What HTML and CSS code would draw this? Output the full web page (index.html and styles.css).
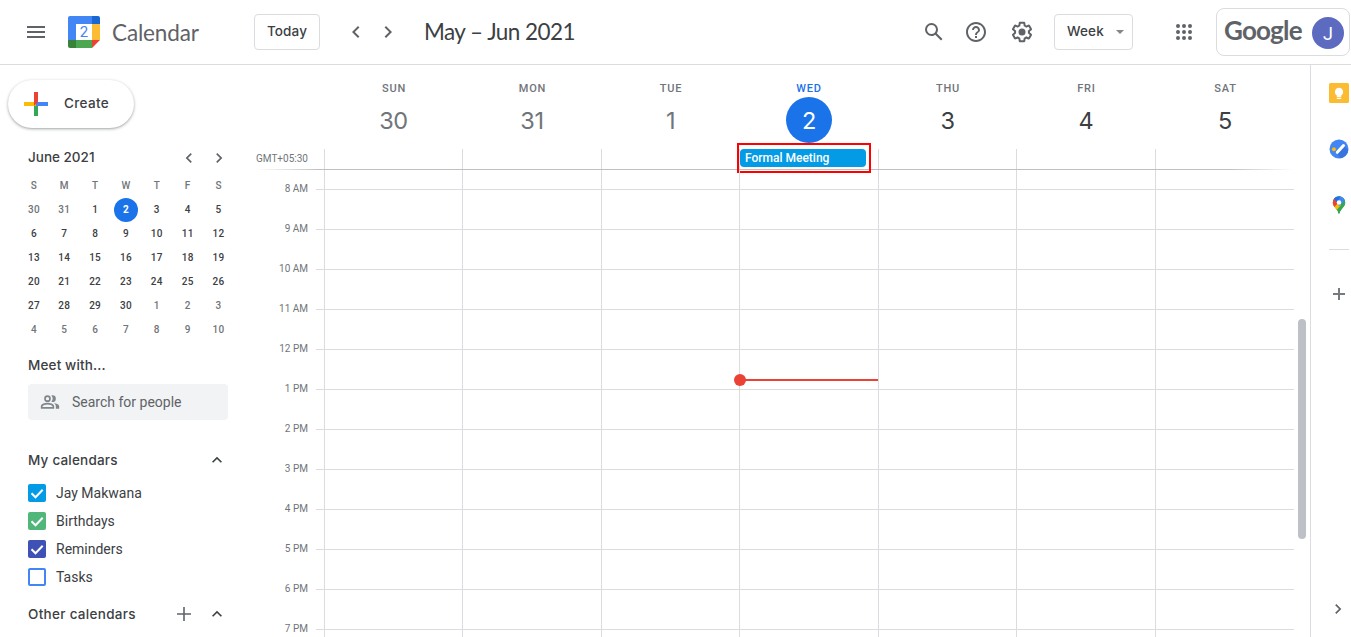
FILE: index.html
```html
<!DOCTYPE html>
<html lang="en">
<head>
<meta charset="utf-8">
<title>Calendar</title>
<link rel="stylesheet" href="styles.css">
</head>
<body>
<header class="topbar">
  <svg class="icon" viewBox="0 0 24 24"><path d="M3 18h18v-2H3v2zm0-5h18v-2H3v2zm0-7v2h18V6H3z"/></svg>
  <div class="logo">
    <svg width="32" height="32" viewBox="0 0 32 32">
      <path fill="#4285f4" d="M2 0h22v8H8v16H0V2a2 2 0 0 1 2-2z"/>
      <path fill="#1967d2" d="M24 0h6a2 2 0 0 1 2 2v6h-8z"/>
      <path fill="#fbbc34" d="M24 8h8v16h-8z"/>
      <path fill="#4ca750" d="M8 24h16v8H8z"/>
      <path fill="#388339" d="M0 24h8v8H2a2 2 0 0 1-2-2z"/>
      <path fill="#ea4335" d="M24 24h8l-8 8z"/>
      <text class="logo-day" x="16" y="21.3" text-anchor="middle">2</text>
    </svg>
    <span class="brand">Calendar</span>
  </div>
  <button class="btn today">Today</button>
  <nav class="pager">
    <svg class="icon" viewBox="0 0 24 24"><path d="M15.4 7.4 14 6l-6 6 6 6 1.4-1.4L10.8 12z"/></svg>
    <svg class="icon" viewBox="0 0 24 24"><path d="M10 6 8.6 7.4l4.6 4.6-4.6 4.6L10 18l6-6z"/></svg>
  </nav>
  <h1 class="range">May – Jun 2021</h1>
  <div class="tools">
    <svg class="icon" viewBox="0 0 24 24"><path d="M20.49 19l-5.73-5.73C15.53 12.2 16 10.91 16 9.5A6.5 6.5 0 1 0 9.5 16c1.41 0 2.7-.47 3.77-1.24L19 20.49 20.49 19zM5 9.5C5 7.01 7.01 5 9.5 5S14 7.01 14 9.5 11.99 14 9.5 14 5 11.99 5 9.5z"/></svg>
    <svg class="icon" viewBox="0 0 24 24"><path d="M11 18h2v-2h-2v2zm1-16C6.48 2 2 6.48 2 12s4.48 10 10 10 10-4.48 10-10S17.52 2 12 2zm0 18c-4.41 0-8-3.59-8-8s3.59-8 8-8 8 3.590 8 8-3.590 8-8 8zm0-14c-2.210 0-4 1.790-4 4h2c0-1.100.9-2 2-2s2 .9 2 2c0 2-3 1.750-3 5h2c0-2.250 3-2.500 3-5 0-2.210-1.790-4-4-4z"/></svg>
    <svg class="icon gear" viewBox="0 0 24 24"><path d="M13.850 22.250h-3.700c-.740 0-1.360-.540-1.450-1.270l-.270-1.890c-.270-.140-.530-.290-.790-.460l-1.800.720c-.7.260-1.470-.030-1.810-.650L2.200 15.530c-.350-.660-.200-1.440.360-1.880l1.530-1.190c-.010-.150-.020-.300-.020-.460 0-.150.010-.310.020-.460l-1.520-1.190c-.590-.450-.740-1.260-.370-1.880l1.850-3.190c.340-.620 1.110-.900 1.790-.630l1.810.730c.260-.170.520-.320.780-.460l.270-1.910c.090-.700.710-1.250 1.440-1.250h3.700c.740 0 1.360.540 1.450 1.270l.270 1.890c.270.140.530.290.790.460l1.800-.720c.710-.260 1.480.030 1.820.650l1.840 3.180c.360.660.200 1.440-.360 1.880l-1.520 1.190c.010.150.020.300.020.460s-.010.310-.020.460l1.520 1.190c.560.450.720 1.230.370 1.860l-1.860 3.220c-.340.620-1.110.900-1.800.630l-1.800-.720c-.260.170-.520.320-.780.460l-.270 1.910c-.100.680-.720 1.220-1.460 1.220zm-3.230-2h2.760l.370-2.550.530-.220c.440-.180.880-.440 1.340-.780l.450-.340 2.380.960 1.380-2.400-2.030-1.580.070-.560c.030-.260.060-.510.060-.780s-.030-.530-.060-.780l-.070-.560 2.030-1.580-1.390-2.400-2.390.960-.450-.350c-.420-.320-.870-.580-1.330-.770l-.520-.220-.370-2.550h-2.760l-.370 2.550-.530.210c-.440.190-.880.440-1.340.790l-.450.330-2.380-.950-1.390 2.390 2.030 1.580-.070.560a7 7 0 0 0-.060.790c0 .260.020.530.060.780l.070.560-2.030 1.580 1.380 2.400 2.390-.960.450.350c.430.330.860.580 1.330.770l.530.220.380 2.550z"/><circle cx="12" cy="12" r="3.500"/></svg>
  </div>
  <button class="btn view">Week<i class="caret"></i></button>
  <svg class="icon apps" viewBox="0 0 24 24"><path d="M6 8a2 2 0 1 0 0-4 2 2 0 0 0 0 4zm6 12a2 2 0 1 0 0-4 2 2 0 0 0 0 4zm-6 0a2 2 0 1 0 0-4 2 2 0 0 0 0 4zm0-6a2 2 0 1 0 0-4 2 2 0 0 0 0 4zm6 0a2 2 0 1 0 0-4 2 2 0 0 0 0 4zm4-8a2 2 0 1 0 4 0 2 2 0 0 0-4 0zm-4 2a2 2 0 1 0 0-4 2 2 0 0 0 0 4zm6 6a2 2 0 1 0 0-4 2 2 0 0 0 0 4zm0 6a2 2 0 1 0 0-4 2 2 0 0 0 0 4z"/></svg>
  <div class="account"><span class="google">Google</span><span class="avatar">J</span></div>
</header>

<div class="layout">
  <aside class="sidebar">
    <button class="create">
      <svg width="24" height="24" viewBox="0 0 24 24"><path fill="#34a853" d="M10 12h4v12h-4z"/><path fill="#4285f4" d="M12 10h12v4H12z"/><path fill="#fbbc05" d="M0 10h12v4H0z"/><path fill="#ea4335" d="M10 0h4v10l-4 4z"/></svg>
      <span>Create</span>
    </button>
    <div class="month-head">
      <span class="heading june">June 2021</span>
      <svg class="icon small" viewBox="0 0 24 24"><path d="M15.400 7.400 14 6l-6 6 6 6 1.400-1.400L10.800 12z"/></svg>
      <svg class="icon small" viewBox="0 0 24 24"><path d="M10 6 8.600 7.400l4.600 4.600-4.600 4.600L10 18l6-6z"/></svg>
    </div>
    <div class="month">
      <b>S</b><b>M</b><b>T</b><b>W</b><b>T</b><b>F</b><b>S</b>
      <i>30</i><i>31</i><span>1</span><span class="now">2</span><span>3</span><span>4</span><span>5</span>
      <span>6</span><span>7</span><span>8</span><span>9</span><span>10</span><span>11</span><span>12</span>
      <span>13</span><span>14</span><span>15</span><span>16</span><span>17</span><span>18</span><span>19</span>
      <span>20</span><span>21</span><span>22</span><span>23</span><span>24</span><span>25</span><span>26</span>
      <span>27</span><span>28</span><span>29</span><span>30</span><i>1</i><i>2</i><i>3</i>
      <i>4</i><i>5</i><i>6</i><i>7</i><i>8</i><i>9</i><i>10</i>
    </div>
    <div class="heading meet">Meet with...</div>
    <div class="people">
      <svg width="20" height="20" viewBox="0 0 24 24"><path fill="#80868b" fill-rule="evenodd" d="M9 4a4 4 0 1 0 0 8 4 4 0 0 0 0-8zm0 2a2 2 0 1 1 0 4 2 2 0 0 1 0-4zM9 13c-2.700 0-8 1.340-8 4v3h16v-3c0-2.660-5.300-4-8-4zm6 5H3v-.990C3.200 16.290 6.300 15 9 15s5.800 1.290 6 2zM15 12a4 4 0 0 0 0-8c-.470 0-.910.100-1.330.240a5.980 5.980 0 0 1 0 7.520c.420.140.860.240 1.330.240zm1.670 1.130C18.040 14.060 19 15.320 19 17v3h4v-3c0-2.180-3.580-3.470-6.330-3.870z"/></svg>
      <span>Search for people</span>
    </div>
    <div class="section mine">
      <span class="heading">My calendars</span>
      <svg class="icon small dark" viewBox="0 0 24 24"><path d="m12 8-6 6 1.400 1.400 4.600-4.600 4.600 4.600L18 14z"/></svg>
    </div>
    <ul class="calendars">
      <li><span class="box sky"><svg viewBox="0 0 18 18"><path d="m3.500 9.300 4 4 7.200-7.500"/></svg></span>Jay Makwana</li>
      <li><span class="box green"><svg viewBox="0 0 18 18"><path d="m3.500 9.300 4 4 7.200-7.500"/></svg></span>Birthdays</li>
      <li><span class="box indigo"><svg viewBox="0 0 18 18"><path d="m3.500 9.300 4 4 7.200-7.500"/></svg></span>Reminders</li>
      <li><span class="box empty"></span>Tasks</li>
    </ul>
    <div class="section other">
      <span class="heading">Other calendars</span>
      <svg class="icon small add" viewBox="0 0 20 20"><path d="M9.200 3h1.600v6.200H17v1.600h-6.200V17H9.200v-6.200H3V9.200h6.200z"/></svg>
      <svg class="icon small dark" viewBox="0 0 24 24"><path d="m12 8-6 6 1.400 1.400 4.600-4.600 4.600 4.600L18 14z"/></svg>
    </div>
  </aside>

  <main class="week">
    <div class="days seven">
      <div class="day past">SUN<strong>30</strong></div>
      <div class="day past">MON<strong>31</strong></div>
      <div class="day past">TUE<strong>1</strong></div>
      <div class="day current">WED<strong>2</strong></div>
      <div class="day">THU<strong>3</strong></div>
      <div class="day">FRI<strong>4</strong></div>
      <div class="day">SAT<strong>5</strong></div>
    </div>
    <div class="allday">
      <span class="zone">GMT+05:30</span>
      <div class="seven slots">
        <div></div><div></div><div></div>
        <div><div class="event">Formal Meeting</div><div class="highlight"></div></div>
        <div></div><div></div><div></div>
      </div>
    </div>
    <div class="shade"></div>
    <div class="grid">
      <div class="hours">
        <span>8 AM</span><span>9 AM</span><span>10 AM</span><span>11 AM</span><span>12 PM</span><span>1 PM</span><span>2 PM</span><span>3 PM</span><span>4 PM</span><span>5 PM</span><span>6 PM</span><span>7 PM</span>
      </div>
      <div class="lines">
        <div class="seven columns">
          <div></div><div></div><div></div>
          <div><div class="now-line"></div></div>
          <div></div><div></div><div></div>
        </div>
      </div>
      <div class="scroll"><div class="thumb"></div></div>
    </div>
  </main>

  <aside class="panel">
    <svg width="20" height="20" viewBox="0 0 20 20"><rect width="20" height="20" rx="1.500" fill="#fbbc32"/><path fill="#fff" d="M10 4.700a4.200 4.200 0 0 0-2.200 7.700V14h4.400v-1.600A4.200 4.200 0 0 0 10 4.700zM7.800 14.800h4.400v1.300H7.800z"/></svg>
    <svg width="20" height="20" viewBox="0 0 20 20"><circle cx="10" cy="10" r="9.500" fill="#4285f4"/><path d="m8.200 14 7-7 4 4a9.500 9.500 0 0 1-8 8.300z" fill="#3874dc"/><path d="m8.300 13.300 6.200-6.800" stroke="#fff" stroke-width="3" stroke-linecap="round"/><circle cx="4.900" cy="10.200" r="2" fill="#fbbc04"/></svg>
    <svg class="maps" width="20" height="20" viewBox="0 0 20 20">
      <clipPath id="pin"><path d="M10 1.300a6.200 6.200 0 0 0-6.200 6.200c0 4.500 4.200 5.500 5.600 10.500q.6 1.500 1.200 0c1.400-5 5.600-6 5.600-10.500A6.200 6.200 0 0 0 10 1.300z"/></clipPath>
      <g clip-path="url(#pin)"><path fill="#34a853" d="M0 0h20v20H0z"/><path fill="#fbbc04" d="M3 9l4-4 5 5-6 7z"/><path fill="#ea4335" d="M2 2h5l3 5-5.500 6L2 9z"/><path fill="#1a73e8" d="M5 3.500 8 0h5l-5 8z"/><path fill="#4285f4" d="M12 0l7 3-9 8-2-3z"/><path fill="#34a853" d="M15.700 4.500 20 7l-8 13H7.500z"/></g><circle cx="10" cy="7.500" r="2.300" fill="#fff"/>
    </svg>
    <hr>
    <svg class="plus" width="20" height="20" viewBox="0 0 20 20"><path fill="#777b7f" d="M9 4h2v5h5v2h-5v5H9v-5H4V9h5z"/></svg>
    <svg class="icon small collapse" viewBox="0 0 24 24"><path d="M10 6 8.600 7.400l4.600 4.600-4.600 4.600L10 18l6-6z"/></svg>
  </aside>
</div>
</body>
</html>
```

FILE: styles.css
```css
* { box-sizing: border-box; }
body {
  margin: 0;
  height: 637px;
  overflow: hidden;
  background: #fff;
  color: #3c4043;
  font-family: Roboto, Arial, sans-serif;
}
button { font: inherit; color: inherit; background: #fff; padding: 0; }
svg { display: block; flex: none; }
.icon { width: 24px; height: 24px; fill: #5f6368; }
.icon.small { width: 20px; height: 20px; }
.icon.dark { fill: #3c4043; }

/* Top bar */
.topbar {
  height: 65px;
  padding: 0 1px 1px 24px;
  display: flex;
  align-items: center;
  border-bottom: 1px solid #dadce0;
}
.logo { display: flex; align-items: center; gap: 12px; width: 186px; margin-left: 20px; }
.logo-day { font: 400 15px Roboto, sans-serif; fill: #4285f4; }
.brand { font: 22.5px Lato, sans-serif; color: #5f6368; letter-spacing: -.15px; margin-top: 1px; }
.btn {
  height: 36px;
  border: 1px solid #dadce0;
  border-radius: 4px;
  font: 550 13.5px Inter, sans-serif;
  letter-spacing: .15px;
}
.today { width: 66px; padding-bottom: 2px; }
.pager { display: flex; gap: 8px; margin-left: 24px; }
.range { margin: 0 auto 1px 24px; font: 22.5px Lato, sans-serif; letter-spacing: -.55px; }
.tools { display: flex; }
.tools .icon + .icon { margin-left: 18px; }
.tools .icon.gear { margin-left: 22px; }
.view {
  width: 79px;
  margin-left: 20px;
  padding: 0 8px 2px 12px;
  display: flex;
  align-items: center;
  justify-content: space-between;
}
.caret { border: 4px solid transparent; border-top-color: #80868b; border-bottom: 0; margin-top: 3px; }
.apps { margin-left: 39px; }
.account {
  width: 134px;
  height: 48px;
  margin-left: 20px;
  padding: 0 5px 0 7px;
  display: flex;
  align-items: center;
  justify-content: space-between;
  border: 1px solid #dadce0;
  border-radius: 8px;
}
.google { font: 700 26px Lato, sans-serif; letter-spacing: -.8px; color: #5f6368; margin-top: -3px; }
.avatar {
  width: 32px;
  height: 32px;
  margin-top: 2px;
  border-radius: 50%;
  background: #5c6bc0;
  color: #fff;
  font-size: 18px;
  line-height: 33px;
  text-align: center;
}

/* Page columns */
.layout { display: flex; height: 572px; }
.sidebar { width: 256px; flex: none; }
.create {
  display: flex;
  align-items: center;
  gap: 16px;
  width: 126px;
  height: 48px;
  margin: 15px 0 0 8px;
  padding-left: 16px;
  border: 0;
  border-radius: 24px;
  box-shadow: 0 1px 2px rgba(60, 64, 67, .3), 0 1px 3px 1px rgba(60, 64, 67, .15);
  font: 550 13.5px Inter, sans-serif;
  letter-spacing: .35px;
}
.create span { margin-top: -3px; }
.heading { font: 550 13.5px/20px Inter, sans-serif; letter-spacing: .3px; }
.month-head { display: flex; align-items: center; height: 20px; margin: 20px 27px 0 28px; gap: 10px; }
.june { flex: 1; margin-top: -2px; letter-spacing: 0; }
.month {
  display: grid;
  grid-template-columns: repeat(7, 1fr);
  grid-auto-rows: 24px;
  width: 216px;
  margin: 6px 0 0 18px;
  justify-items: center;
  font: 500 10px/24px Roboto, sans-serif;
  letter-spacing: .3px;
}
.month b, .month i { font-weight: 500; font-style: normal; color: #70757a; }
.month > :nth-child(7n + 1) { padding-left: 1px; }
.month .now {
  width: 24px;
  height: 24px;
  border-radius: 50%;
  background: #1a73e8;
  color: #fff;
  font-weight: 700;
  text-align: center;
}
.meet { margin: 13px 0 0 28px; letter-spacing: .15px; }
.people {
  display: flex;
  align-items: center;
  gap: 12px;
  width: 200px;
  height: 36px;
  margin: 9px 0 0 28px;
  padding-left: 12px;
  border-radius: 4px;
  background: #f1f3f4;
  color: #5f6368;
  font-size: 14px;
}
.section { display: flex; align-items: center; height: 20px; margin: 0 29px 0 28px; }
.section .heading { flex: 1; margin-top: -1px; }
.mine { margin-top: 30px; }
.mine .heading { letter-spacing: .2px; }
.calendars { list-style: none; margin: 9px 0 0 28px; padding: 0; font-size: 14px; }
.calendars li { display: flex; align-items: center; gap: 10px; height: 28px; }
.box { width: 18px; height: 18px; border-radius: 2px; }
.box path { fill: none; stroke: #fff; stroke-width: 2; }
.sky { background: #039be5; }
.green { background: #51b679; }
.indigo { background: #3f51b5; }
.empty { border: 2px solid #4285f4; }
.other { margin-top: 13px; }
.other .add { margin-right: 13px; }

/* Week view */
.week { width: 1054px; flex: none; }
.seven { display: grid; grid-template-columns: 138px 139px 138px 139px 138px 139px 139px; }
.days { height: 84px; padding-left: 68px; }
.day {
  padding: 17px 0 0 2px;
  display: flex;
  flex-direction: column;
  align-items: center;
  font: 500 11px/13px Roboto, sans-serif;
  letter-spacing: .8px;
  color: #70757a;
}
.day strong {
  width: 46px;
  height: 46px;
  margin-top: 2px;
  padding-right: 1px;
  border-radius: 50%;
  font: 400 23.5px/48px Inter, sans-serif;
  letter-spacing: -.4px;
  text-align: center;
  color: #3c4043;
}
.day.past strong { color: #70757a; }
.day.current { color: #1a73e8; padding-left: 1px; }
.day.current strong { background: #1a73e8; color: #fff; padding-right: 0; }
.allday { display: flex; height: 20px; }
.zone { width: 68px; font-size: 10px; line-height: 19px; color: #70757a; }
.slots > div { position: relative; border-left: 1px solid #dadce0; }
.event {
  width: 126px;
  height: 18px;
  padding-left: 5px;
  border-radius: 4px;
  background: #039be5;
  color: #fff;
  font: 500 12px/18px Roboto, sans-serif;
}
.highlight { position: absolute; left: -3px; top: -6px; width: 134px; height: 30px; border: 2px solid #f00; }
.shade {
  height: 1px;
  width: 1038px;
  background: linear-gradient(90deg, transparent, #c0c0c0 64px, #c0c0c0 974px, transparent);
}
.grid { display: flex; height: 467px; overflow: hidden; }
.hours {
  display: flex;
  flex-direction: column;
  flex: none;
  width: 52px;
  padding-top: 9px;
  font-size: 10px;
  line-height: 20px;
  text-align: right;
  color: #70757a;
}
.hours span { height: 40px; flex: none; }
.lines {
  width: 978px;
  margin-left: 8px;
  padding-left: 8px;
  background: repeating-linear-gradient(#dadce0 0 1px, transparent 1px 40px) 0 19px no-repeat;
}
.columns { height: 100%; }
.columns > div { position: relative; border-left: 1px solid #dadce0; }
.now-line { position: absolute; left: 0; right: 0; top: 209px; height: 2px; background: #ea4335; }
.now-line::before {
  content: "";
  position: absolute;
  left: -6px;
  top: -5px;
  width: 12px;
  height: 12px;
  border-radius: 50%;
  background: #ea4335;
}
.scroll { padding: 149px 0 0 4px; }
.thumb { width: 8px; height: 220px; border-radius: 4px; background: #bdc1c6; }

/* Side panel */
.panel {
  flex: 1;
  display: flex;
  flex-direction: column;
  padding: 18px 0 18px 18px;
  border-left: 1px solid #dadce0;
}
.panel svg + svg { margin-top: 36px; }
.panel hr { width: 20px; height: 1px; margin: 34px 0; border: 0; background: #dadce0; }
.panel svg.collapse { margin: auto 0 0 -1px; }
```
